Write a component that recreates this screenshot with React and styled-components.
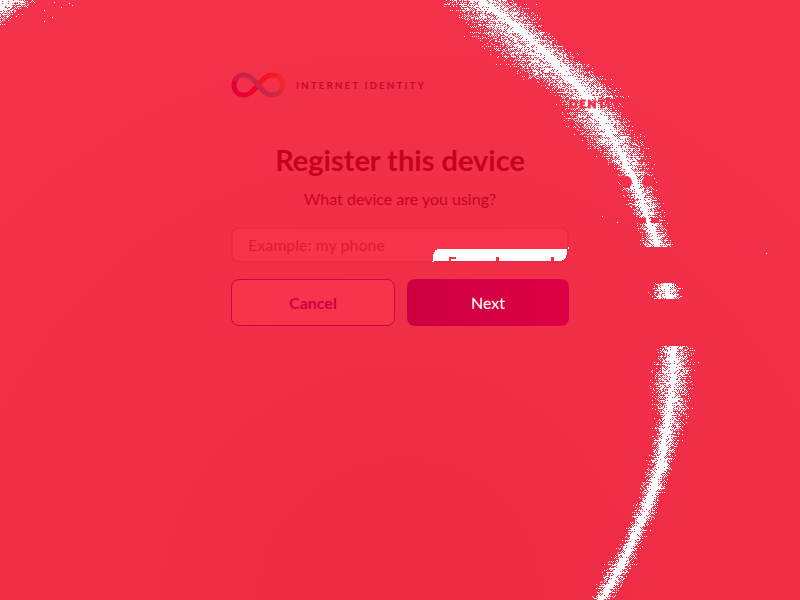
import React from "react";
import styled, { createGlobalStyle } from "styled-components";

const GlobalStyle = createGlobalStyle`
  *, *::before, *::after { box-sizing: border-box; }
  body {
    margin: 0;
    background: #f5324b;
    font-family: Lato, "Liberation Sans", sans-serif;
  }
`;

const Page = styled.main`
  position: relative;
  min-height: 100vh;
  padding: 72px 24px;
  overflow: hidden;
  background: radial-gradient(circle at 50% 100%, #ec2a44 0, #f02e48 300px, #f5324b 640px);
`;

const Grain = styled.svg`
  position: absolute;
  top: 0;
  left: 50%;
  width: 800px;
  height: 600px;
  transform: translateX(-50%);
  pointer-events: none;
`;

const Card = styled.form`
  position: relative;
  display: flex;
  flex-direction: column;
  max-width: 338px;
  margin: 0 auto;
`;

const Brand = styled.div`
  display: flex;
  align-items: center;
  gap: 10px;
  height: 26px;
  color: #c40a28;
  font-size: 10px;
  font-weight: 700;
  line-height: 24px;
  letter-spacing: 2px;
  text-transform: uppercase;
`;

const Mark = styled.svg`
  width: 55px;
  height: 26px;
`;

const Title = styled.h1`
  margin: 44px 0 0;
  color: #c7001f;
  font-size: 29px;
  font-weight: 700;
  line-height: 36px;
  text-align: center;
`;

const Question = styled.label`
  margin-top: 10px;
  color: #c50420;
  font-size: 16px;
  line-height: 22px;
  text-align: center;
`;

const Field = styled.div`
  position: relative;
  margin-top: 17px;
`;

const DeviceInput = styled.input`
  display: block;
  width: 100%;
  height: 36px;
  padding: 0 15px 2px;
  border: 2px solid #eb2b44;
  border-radius: 8px;
  outline: none;
  background: #f7344c;
  color: #c50420;
  font-family: inherit;
  font-size: 16px;
  &::placeholder { color: #dc1a36; opacity: 1; }
`;

const Fragment = styled.svg`
  position: absolute;
  right: 0;
  bottom: 0;
  width: 137px;
  height: 16px;
  pointer-events: none;
`;

const Actions = styled.div`
  display: grid;
  grid-template-columns: 164px 1fr;
  gap: 12px;
  margin-top: 16px;
`;

const Button = styled.button`
  height: 47px;
  padding: 0;
  border: 1px solid ${(p) => (p.$primary ? "transparent" : "#cf0044")};
  border-radius: 8px;
  background: ${(p) => (p.$primary ? "linear-gradient(90deg, #cc0041, #dc0045) border-box" : "#f7344c")};
  color: ${(p) => (p.$primary ? "#fff" : "#cf0044")};
  font-family: inherit;
  font-size: 16px;
  font-weight: ${(p) => (p.$primary ? 400 : 700)};
  text-shadow: ${(p) => (p.$primary ? "0 -1px #f5324b" : "none")};
`;

// Each stop: y, left edge, bright centre, right edge.
const stops = [
  [0, 432, 481, 525], [12, 446, 498, 542], [30, 462, 520, 550], [55, 488, 547, 580],
  [75, 512, 567, 608], [90, 546, 582, 627], [105, 556, 591, 628], [118, 560, 601, 628],
  [132, 573, 608, 639], [152, 591, 620, 653], [170, 615, 628, 653], [190, 618, 638, 660],
  [220, 633, 648, 668], [246, 639, 658, 675], [287, 648, 667, 685], [299, 645, 669, 684],
  [346, 652, 673, 699], [385, 647, 672, 695], [413, 653, 669, 691], [440, 650, 663, 682],
  [465, 644, 661, 676], [490, 637, 652, 665], [515, 629, 643, 657], [540, 621, 632, 644],
  [567, 601, 620, 635], [600, 588, 600, 616],
];
const bayer = [0, 8, 2, 10, 12, 4, 14, 6, 3, 11, 1, 9, 15, 7, 13, 5];

function noise(x, y) {
  let n = Math.imul(x, 374761393) + Math.imul(y, 668265263);
  n = Math.imul(n ^ (n >>> 13), 1274126177);
  return ((n ^ (n >>> 16)) >>> 0) / 4294967296;
}

function threshold(x, y) {
  const cell = (bayer[(y & 3) * 4 + (x & 3)] + 0.5) / 16;
  return cell * 0.45 + noise(x, y) * 0.55;
}

function buildGrain() {
  let d = "";
  for (let y = 0; y < 600; y++) {
    if ((y >= 247 && y < 283) || (y >= 299 && y < 346)) continue;
    const i = Math.max(0, stops.findIndex((s) => s[0] > y) - 1);
    const a = stops[i];
    const t = (y - a[0]) / (stops[i + 1][0] - a[0]);
    const [, left, mid, right] = a.map((v, k) => v + (stops[i + 1][k] - v) * t);
    const ragged = 1 + (noise(y, 991) - 0.5) * 0.35;
    const coreWidth = y < 130 ? 7 : 4;
    for (let x = Math.floor(left - 8); x < right + 9; x++) {
      const span = (x < mid ? mid - left : right - mid) * ragged;
      const u = Math.abs(x - mid) / span;
      const core = Math.abs(x - mid) / coreWidth;
      const density = Math.max(1 - core * 0.35, 0.66 * (1 - Math.pow(u, 1.8)));
      if (threshold(x, y) < density && u < 1.15) d += `M${x} ${y}h1v1h-1z`;
    }
  }
  for (let y = 0; y < 30; y++) {
    for (let x = 0; x < 45; x++) {
      if (threshold(x, y) < 1 - (x + y * 1.4) / 46) d += `M${x} ${y}h1v1h-1z`;
    }
  }
  for (const [x, y] of [[54, 2], [69, 3], [72, 5], [61, 7], [44, 10], [52, 17], [44, 21], [602, 216], [617, 222], [766, 253]]) {
    d += `M${x} ${y}h1v1h-1z`;
  }
  return d;
}

const grainPath = buildGrain();

function Backdrop() {
  return (
    <Grain viewBox="0 0 800 600" aria-hidden="true">
      <path d={grainPath} fill="#fff" shapeRendering="crispEdges" />
      <g fill="#f3304a">
        <text x="569" y="108" fontFamily="Lato, sans-serif" fontSize="11" fontWeight="900" letterSpacing="2" stroke="#f3304a">DENTITY</text>
        <circle cx="626" cy="182" r="6" />
        <circle cx="647" cy="182" r="5" />
        <rect x="638" y="218" width="8" height="5" />
        <rect x="651" y="218" width="8" height="5" />
      </g>
    </Grain>
  );
}

function Infinity() {
  return (
    <Mark viewBox="0 0 55 26" fill="none" strokeWidth="5" aria-hidden="true">
      <defs>
        <linearGradient id="warm" x1="29" y1="4" x2="52" y2="18" gradientUnits="userSpaceOnUse">
          <stop stopColor="#f5101f" />
          <stop offset="1" stopColor="#f52c26" />
        </linearGradient>
        <linearGradient id="cool" x1="3" y1="10" x2="24" y2="20" gradientUnits="userSpaceOnUse">
          <stop stopColor="#df0038" />
          <stop offset="1" stopColor="#f5002d" />
        </linearGradient>
        <linearGradient id="band" x1="3" y1="0" x2="52" y2="0" gradientUnits="userSpaceOnUse">
          <stop stopColor="#dd1340" />
          <stop offset="0.25" stopColor="#c9254b" />
          <stop offset="0.75" stopColor="#c9254b" />
          <stop offset="1" stopColor="#e02a3b" />
        </linearGradient>
      </defs>
      <path d="M27 13C33 6 36 3 41 3c6 0 11 4 11 10 0 3-1 5-3 7" stroke="url(#warm)" />
      <path d="M6 6C4 8 3 10 3 13c0 6 4 10 10 10 5 0 8-3 14-10" stroke="url(#cool)" />
      <path d="M4 9c1-4 5-6 9-6 5 0 8 3 14 10s9 10 14 10c5 0 9-3 10-7" stroke="url(#band)" />
    </Mark>
  );
}

export default function App() {
  return (
    <>
      <GlobalStyle />
      <Page>
        <Backdrop />
        <Card onSubmit={(e) => e.preventDefault()}>
          <Brand><Infinity /><span>Internet Identity</span></Brand>
          <Title>Register this device</Title>
          <Question htmlFor="device">What device are you using?</Question>
          <Field>
            <DeviceInput id="device" type="text" placeholder="Example: my phone" />
            <Fragment viewBox="0 0 137 16" shapeRendering="crispEdges" aria-hidden="true">
              <path d="M8 2H135V4Q135 14 127 14H1V10Q1 2 8 2Z" fill="#fff" />
              <path d="M136 0h2v2h-2zM0 14h2v1h-2z" fill="#fff" />
              <path d="M17 10h7v2h-5v2h-2zM64 10h3v4h-3zM119 10h3v4h-3z" fill="#f3304a" />
            </Fragment>
          </Field>
          <Actions>
            <Button type="button">Cancel</Button>
            <Button type="submit" $primary>Next</Button>
          </Actions>
        </Card>
      </Page>
    </>
  );
}
